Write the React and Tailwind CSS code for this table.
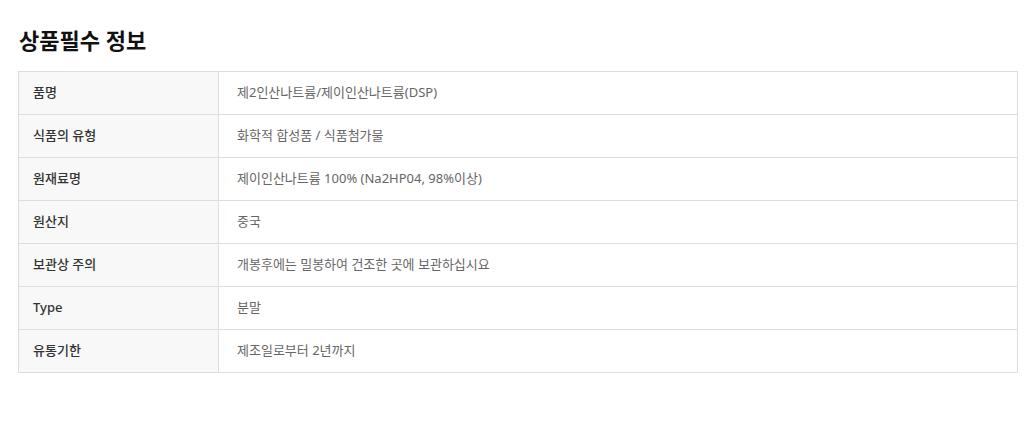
const rows = [
  ['품명', '제2인산나트륨/제이인산나트륨(DSP)'],
  ['식품의 유형', '화학적 합성품 / 식품첨가물'],
  ['원재료명', '제이인산나트륨 100% (Na2HP04, 98%이상)'],
  ['원산지', '중국'],
  ['보관상 주의', '개봉후에는 밀봉하여 건조한 곳에 보관하십시요'],
  ['Type', '분말'],
  ['유통기한', '제조일로부터 2년까지'],
];

export default function App() {
  return (
    <div
      className="min-h-[442px] bg-white px-[18px] pt-[26px]"
      style={{ fontFamily: '"Noto Sans", "Noto Sans CJK KR", sans-serif' }}
    >
      <h2 className="mb-[17px] pl-[1px] text-[22px] font-bold leading-[28px] text-[#111]">상품필수 정보</h2>

      {/* Info table */}
      <div className="w-[1000px] border border-[#dddddd]">
        {rows.map(([label, value], i) => (
          <div
            key={label}
            className={`flex ${i < rows.length - 1 ? 'h-[43px] border-b border-[#dddddd]' : 'h-[42px]'}`}
          >
            <div className="flex w-[200px] shrink-0 items-center border-r border-[#dddddd] bg-[#f8f8f8] pl-[14px] text-[13px] font-medium text-[#333]">
              {label}
            </div>
            <div className="flex items-center pl-[18px] text-[13px] text-[#666]">{value}</div>
          </div>
        ))}
      </div>
    </div>
  );
}
